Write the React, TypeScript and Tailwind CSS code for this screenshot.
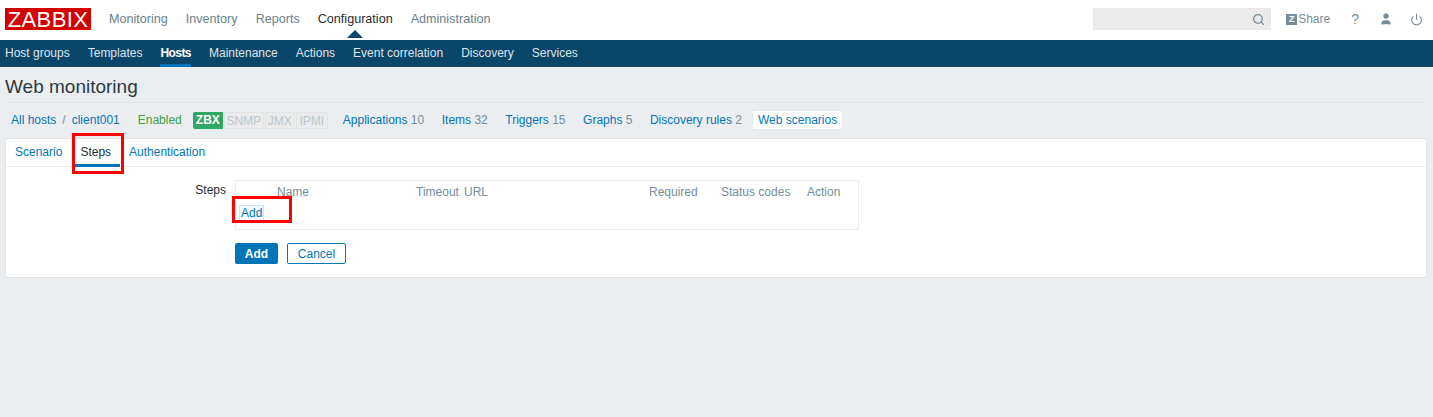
import { Power, Search, User } from "lucide-react";

const topNav = ["Monitoring", "Inventory", "Reports", "Configuration", "Administration"];
const subNav = ["Host groups", "Templates", "Hosts", "Maintenance", "Actions", "Event correlation", "Discovery", "Services"];
const hostLinks = [
  ["Applications", "10"],
  ["Items", "32"],
  ["Triggers", "15"],
  ["Graphs", "5"],
  ["Discovery rules", "2"],
];

export default function App() {
  return (
    <main className="h-[417px] overflow-hidden bg-[#ebeef0] text-[12px] text-[#1f2c33] font-['Liberation_Sans',Arial,sans-serif]">
      <header className="h-10 bg-white flex items-center pl-[5px] pr-[10px] pb-[2px]">
        <div className="w-[86px] h-[22px] bg-[#d40000] text-white text-[22px] leading-[23px] text-center tracking-[0.4px]">ZABBIX</div>
        <nav className="relative flex gap-[18px] ml-[18px] text-[12.6px] text-[#687f8c]">
          {topNav.map((item) => (
            <a key={item} href="#" className={item === "Configuration" ? "relative text-[#1f2c33]" : ""}>
              {item}
              {item === "Configuration" && (
                <span className="absolute left-[29px] top-[20px] w-0 h-0 border-x-[8px] border-x-transparent border-b-[8px] border-b-[#0a466a]" />
              )}
            </a>
          ))}
        </nav>
        <div className="ml-auto flex items-center">
          <div className="w-[178px] h-[22px] bg-[#ebebeb] border border-[#e8e8e8] flex items-center justify-end pr-[5px]">
            <Search size={13} strokeWidth={2.4} className="text-[#768d99]" />
          </div>
          <a href="#" className="flex items-center ml-[15px] text-[#768d99]">
            <span className="w-[11px] h-[11px] bg-[#768d99] text-white text-[9px] leading-[11px] font-bold text-center">Z</span>
            <span className="ml-[1px]">Share</span>
          </a>
          <span className="ml-[21px] text-[#768d99] text-[14px]">?</span>
          <User size={14} fill="#768d99" strokeWidth={1.5} className="ml-[20px] text-[#768d99]" />
          <Power size={13} strokeWidth={2} className="ml-[17px] text-[#768d99]" />
        </div>
      </header>

      <nav className="h-[27px] bg-[#0a466a] flex gap-[18px] pl-[5px]">
        {subNav.map((item) => (
          <a
            key={item}
            href="#"
            className={
              item === "Hosts"
                ? "h-[27px] leading-[26px] font-bold tracking-[-0.55px] text-white border-b-[3px] border-[#0275b8]"
                : "h-[27px] leading-[26px] text-[#dee5ea]"
            }
          >
            {item}
          </a>
        ))}
      </nav>

      <div className="pl-[5px] pr-[6px]">
        <h1 className="h-[36px] leading-[40px] text-[19px] text-[#2c3a42] border-b border-[#dfe4e7]">Web monitoring</h1>

        <div className="h-[35px] pb-[1px] flex items-center pl-[6px]">
          <a href="#" className="text-[#0275b8]">All hosts</a>
          <span className="mx-[6px] text-[#768d99]">/</span>
          <a href="#" className="text-[#0275b8]">client001</a>
          <span className="ml-[18px] text-[#429e47]">Enabled</span>
          <div className="ml-[11px] flex gap-[1px] h-[17px] text-[12px] leading-[16px]">
            <span className="w-[30px] bg-[#2fa866] text-white font-bold text-center rounded-l-[2px]">ZBX</span>
            <span className="w-[40px] bg-[#ebebeb] border border-[#dfe4e7] text-[#bcc7ce] text-center">SNMP</span>
            <span className="w-[30px] bg-[#ebebeb] border border-[#dfe4e7] text-[#bcc7ce] text-center">JMX</span>
            <span className="w-[32px] bg-[#ebebeb] border border-[#dfe4e7] text-[#bcc7ce] text-center rounded-r-[2px]">IPMI</span>
          </div>
          <div className="ml-[15px] flex gap-[17.5px]">
            {hostLinks.map(([label, count]) => (
              <span key={label} className="text-[#768d99]">
                <a href="#" className="text-[#0275b8]">{label}</a> {count}
              </span>
            ))}
          </div>
          <span className="ml-[10px] h-[20px] leading-[19px] px-[5px] bg-white border border-[#e4e8ea] text-[#0275b8]">Web scenarios</span>
        </div>

        <section className="relative h-[140px] bg-white border border-[#dfe4e7]">
          <div className="h-[28px] flex border-b border-[#ebeef0]">
            <a href="#" className="px-[9px] leading-[26px] text-[#0275b8]">Scenario</a>
            <a href="#" className="h-[28px] ml-[3px] pl-[6px] pr-[9px] leading-[26px] text-[#1f2c33] border-b-[3px] border-[#0275b8]">Steps</a>
            <a href="#" className="px-[9px] leading-[26px] text-[#0275b8]">Authentication</a>
          </div>

          <div className="flex pt-[13px]">
            <label className="w-[220px] text-right leading-[20px]">Steps</label>
            <div className="ml-[9px]">
              <div className="w-[624px] h-[50px] border border-[#ebeef0] text-[#768d99]">
                <div className="flex h-[23px] leading-[23px]">
                  <span className="w-[180px] pl-[41px]">Name</span>
                  <span className="w-[48px]">Timeout</span>
                  <span className="w-[185px]">URL</span>
                  <span className="w-[72px]">Required</span>
                  <span className="w-[86px]">Status codes</span>
                  <span>Action</span>
                </div>
                <a href="#" className="ml-[3px] inline-block leading-[14px] px-[1px] border border-[#cfe4f5] bg-[#f4f9fd] text-[#0275b8]">Add</a>
              </div>
              <div className="flex gap-[9px] mt-[13px]">
                <button className="w-[43px] h-[21px] bg-[#0275b8] text-white font-bold rounded-[2px]">Add</button>
                <button className="w-[59px] h-[21px] bg-white border border-[#0275b8] text-[#0275b8] rounded-[2px]">Cancel</button>
              </div>
            </div>
          </div>

          <span className="absolute left-[66px] top-[-6px] w-[52px] h-[41px] border-[3px] border-[#ff0000]" />
          <span className="absolute left-[226px] top-[57px] w-[60px] h-[27px] border-[3px] border-[#ff0000]" />
        </section>
      </div>
    </main>
  );
}
